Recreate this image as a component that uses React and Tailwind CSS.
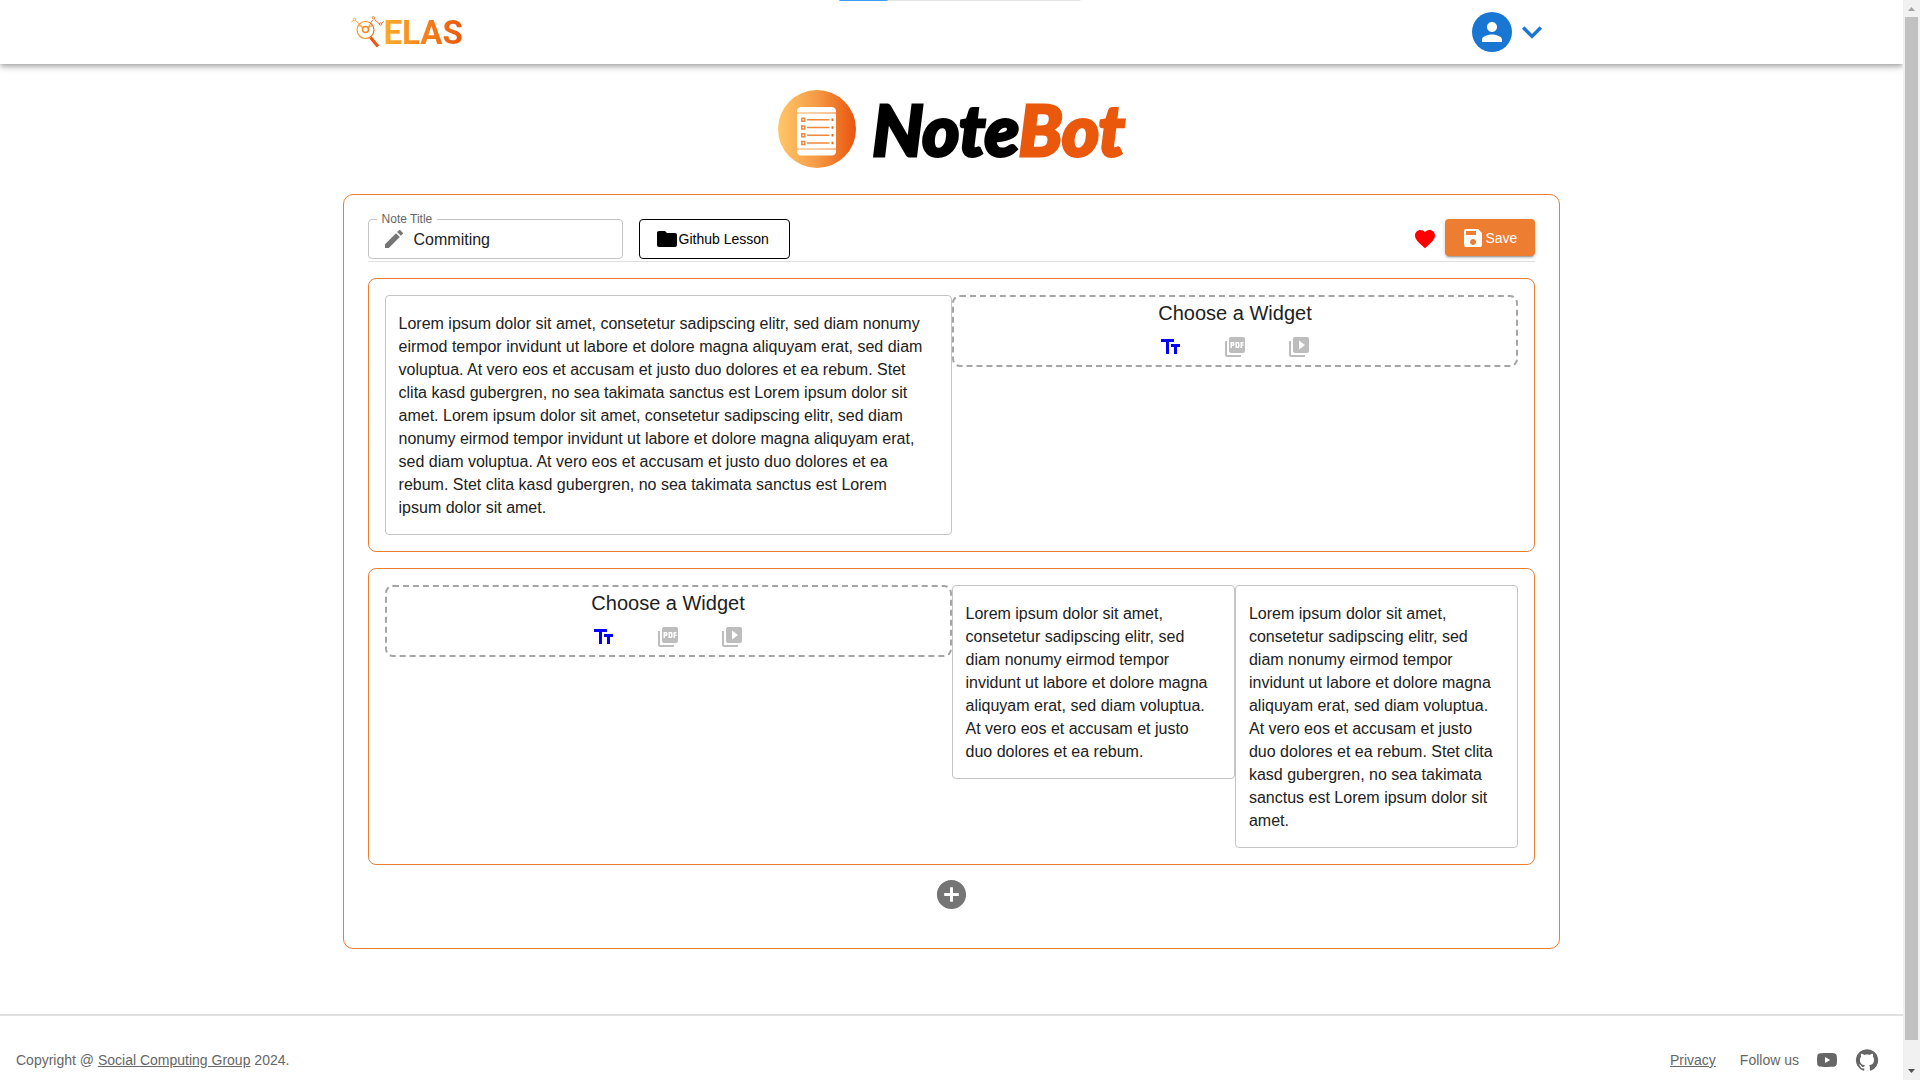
import React from "react";
import {
  MdAddCircle,
  MdEdit,
  MdFavorite,
  MdFolder,
  MdKeyboardArrowDown,
  MdPerson,
  MdSave,
} from "react-icons/md";

const LONG_NOTE =
  "Lorem ipsum dolor sit amet, consetetur sadipscing elitr, sed diam nonumy eirmod tempor invidunt ut labore et dolore magna aliquyam erat, sed diam voluptua. At vero eos et accusam et justo duo dolores et ea rebum. Stet clita kasd gubergren, no sea takimata sanctus est Lorem ipsum dolor sit amet. Lorem ipsum dolor sit amet, consetetur sadipscing elitr, sed diam nonumy eirmod tempor invidunt ut labore et dolore magna aliquyam erat, sed diam voluptua. At vero eos et accusam et justo duo dolores et ea rebum. Stet clita kasd gubergren, no sea takimata sanctus est Lorem ipsum dolor sit amet.";
const SHORT_NOTE =
  "Lorem ipsum dolor sit amet, consetetur sadipscing elitr, sed diam nonumy eirmod tempor invidunt ut labore et dolore magna aliquyam erat, sed diam voluptua. At vero eos et accusam et justo duo dolores et ea rebum.";
const MEDIUM_NOTE =
  SHORT_NOTE +
  " Stet clita kasd gubergren, no sea takimata sanctus est Lorem ipsum dolor sit amet.";

function Glyph({ d, className }) {
  return (
    <svg viewBox="0 0 24 24" className={className} fill="currentColor" aria-hidden="true">
      <path d={d} />
    </svg>
  );
}

const TEXT_D = "M2 4v3h5v12h3V7h5V4H2zm19 5h-9v3h3v7h3v-7h3V9z";
const PDF_D =
  "M20 2H8c-1.1 0-2 .9-2 2v12c0 1.1.9 2 2 2h12c1.1 0 2-.9 2-2V4c0-1.1-.9-2-2-2zm-8.500 7.500c0 .83-.67 1.500-1.500 1.500H9v2H7.500V7H10c.83 0 1.500.67 1.500 1.500v1zm5 2c0 .83-.67 1.500-1.500 1.500h-2.500V7H15c.83 0 1.500.67 1.500 1.500v3zm4-3H19v1h1.500V11H19v2h-1.500V7h3v1.500zM9 9.500h1v-1H9v1zM4 6H2v14c0 1.100.9 2 2 2h14v-2H4V6zm10 5.500h1v-3h-1v3z";
const VIDEO_D =
  "M4 6H2v14c0 1.100.9 2 2 2h14v-2H4V6zm16-4H8c-1.100 0-2 .9-2 2v12c0 1.100.9 2 2 2h12c1.100 0 2-.9 2-2V4c0-1.100-.9-2-2-2zm-8 12.500v-9l6 4.500-6 4.500z";
const YOUTUBE_D =
  "M10 15l5.190-3L10 9v6m11.560-7.830c.130.470.220 1.100.280 1.900.070.800.100 1.490.100 2.090L22 12c0 2.190-.160 3.800-.440 4.830-.250.900-.830 1.480-1.730 1.730-.470.130-1.330.220-2.650.280-1.300.070-2.490.100-3.590.100L12 19c-4.190 0-6.800-.160-7.830-.440-.900-.250-1.480-.830-1.730-1.730-.130-.470-.220-1.100-.280-1.900-.070-.800-.100-1.490-.100-2.090L2 12c0-2.190.160-3.800.440-4.830.250-.900.830-1.480 1.730-1.730.470-.130 1.330-.220 2.650-.280 1.300-.070 2.490-.100 3.590-.100L12 5c4.190 0 6.800.160 7.830.440.900.250 1.480.830 1.730 1.730z";
const GITHUB_D =
  "M12 1.270a11 11 0 00-3.480 21.460c.550.090.730-.280.730-.550v-1.840c-3.030.640-3.670-1.460-3.670-1.460-.550-1.290-1.280-1.650-1.280-1.650-.920-.650.100-.650.100-.650 1.100 0 1.730 1.100 1.730 1.100.920 1.650 2.570 1.200 3.210.920a2 2 0 01.640-1.470c-2.470-.270-5.040-1.190-5.040-5.500 0-1.100.460-2.100 1.200-2.840a3.760 3.760 0 010-2.930s.910-.280 3.110 1.100c1.800-.490 3.700-.490 5.500 0 2.100-1.380 3.020-1.100 3.020-1.100a3.760 3.760 0 01.100 2.930c.830.740 1.200 1.740 1.200 2.940 0 4.210-2.570 5.130-5.040 5.400.450.370.820.920.820 2.020v3.030c0 .270.100.640.730.550A11 11 0 0012 1.270";

function ElasLogo() {
  return (
    <a href="#home" aria-label="ELAS" className="flex items-center">
      <svg viewBox="0 0 33 33" className="h-[33px] w-[33px]" fill="none" aria-hidden="true">
        <defs>
          <linearGradient id="elas" x1="0" y1="0" x2="33" y2="0" gradientUnits="userSpaceOnUse">
            <stop offset="0" stopColor="#fbab2c" />
            <stop offset="1" stopColor="#ea560d" />
          </linearGradient>
        </defs>
        <g stroke="url(#elas)">
          <path d="M0 6.500l2.300-2.300M4.700 4.700l7 6.300M17.500 11l4-7M23.500 3.500l5 4.500M30.500 7.500l2-2" strokeWidth="0.900" />
          <circle cx="3.500" cy="3.500" r="1.200" strokeWidth="0.900" />
          <circle cx="22.500" cy="1.800" r="1.200" strokeWidth="0.900" />
          <circle cx="29.600" cy="8" r="1.200" strokeWidth="0.900" />
          <circle cx="14.500" cy="14" r="8.500" strokeWidth="1.200" />
          <circle cx="14.500" cy="13.500" r="3" strokeWidth="1.500" />
          <path d="M8 10c2 0 3 1 3.500 2M21 10c-2 0-3 1-3.500 2" strokeWidth="1" />
        </g>
        <path d="M19.500 21.500l7.500 9" stroke="#e9590f" strokeWidth="3.200" />
      </svg>
      <span className="bg-linear-to-r from-[#fdab2b] to-[#ea560d] bg-clip-text pt-0.5 font-['Roboto',sans-serif] text-[33px] leading-[40px] font-bold text-transparent">
        ELAS
      </span>
    </a>
  );
}

function NoteBotLogo() {
  const rows = [0, 15.500, 31, 46.500];
  return (
    <h1 className="flex items-center justify-center gap-4 py-[26px]">
      <svg viewBox="0 0 156 156" className="h-[78px] w-[78px]" aria-hidden="true">
        <defs>
          <linearGradient id="disc" x1="0" x2="1" y1="0" y2="0">
            <stop offset="0" stopColor="#ffc768" />
            <stop offset="0.500" stopColor="#f59a45" />
            <stop offset="1" stopColor="#e9540d" />
          </linearGradient>
        </defs>
        <circle cx="78" cy="78" r="78" fill="url(#disc)" />
        <path d="M38 45v-2q0-9 9-9h60q9 0 9 9v2zM38 47h78v70H38zM38 119h78v3q0 9-9 9H47q-9 0-9-9z" fill="#fff" />
        {rows.map((y) => (
          <g key={y} transform={"translate(0 " + (y + 30) + ")"} fill="#f0873a">
            <rect x="46" y="25" width="9" height="9" />
            <rect x="49" y="28" width="3" height="3" fill="#fff" />
            <rect x="58" y="28" width="45" height="3" />
            <rect x="107" y="27" width="4" height="5" fill="#ea6a20" />
          </g>
        ))}
      </svg>
      <span className="font-['Lato',sans-serif] text-[71px] leading-[78px] font-black text-black italic [-webkit-text-stroke:3px_currentColor] [paint-order:stroke_fill]">
        Note<span className="text-[#ea580c]">Bot</span>
      </span>
    </h1>
  );
}

function ChooseWidget() {
  return (
    <section className="rounded-lg border-2 border-dashed border-[#a5a5a5] text-center">
      <h2 className="text-xl leading-8 text-[#212121]">Choose a Widget</h2>
      <div className="flex justify-center gap-6">
        <button aria-label="Text" className="flex h-9 w-10 items-center justify-center text-[#0000ff]">
          <Glyph d={TEXT_D} className="h-6 w-6" />
        </button>
        <button aria-label="PDF" className="flex h-9 w-10 items-center justify-center text-[#bdbdbd]">
          <Glyph d={PDF_D} className="h-6 w-6" />
        </button>
        <button aria-label="Video" className="flex h-9 w-10 items-center justify-center text-[#bdbdbd]">
          <Glyph d={VIDEO_D} className="h-6 w-6" />
        </button>
      </div>
    </section>
  );
}

function Note({ children }) {
  return (
    <p className="rounded border border-[#c4c4c4] pt-4 pr-[22px] pb-[15px] pl-[13px] text-base leading-[23px] text-[#212121]">
      {children}
    </p>
  );
}

export default function App() {
  return (
    <div className="relative flex min-h-screen bg-white font-['Liberation_Sans',Arial,sans-serif] text-[#212121]">
      <div className="absolute top-0 left-1/2 z-10 h-px w-[241px] -translate-x-1/2 bg-[#e5e5e5]">
        <div className="h-px w-1/5 bg-[#409eff]" />
      </div>

      <div className="flex min-w-0 flex-1 flex-col">
        <header className="shadow-[0_2px_4px_-1px_rgba(0,0,0,0.2),0_4px_5px_0_rgba(0,0,0,0.14),0_1px_10px_0_rgba(0,0,0,0.12)]">
          <div className="mx-auto flex h-16 w-[64%] items-center justify-between px-2">
            <ElasLogo />
            <button aria-label="Account menu" className="flex items-center text-[#1976d2]">
              <span className="flex h-10 w-10 items-center justify-center rounded-full bg-[#1976d2] text-white">
                <MdPerson className="h-[30px] w-[30px]" />
              </span>
              <MdKeyboardArrowDown className="h-10 w-10" />
            </button>
          </div>
        </header>

        <main className="mx-auto w-[64%] flex-1">
          <NoteBotLogo />
          <div className="rounded-[10px] border border-[#ed7d31] px-6 pt-6 pb-6">
            <div className="flex items-start justify-between border-b border-[#e0e0e0] pb-0.5">
              <div className="flex gap-4">
                <div className="relative flex h-10 w-[255px] items-center gap-2 rounded border border-[#c4c4c4] px-[13px]">
                  <label
                    htmlFor="note-title"
                    className="absolute -top-[9px] left-2 bg-white px-[5px] text-xs leading-4 text-[#666666]"
                  >
                    Note Title
                  </label>
                  <MdEdit className="h-6 w-6 shrink-0 text-[#757575]" />
                  <input id="note-title" defaultValue="Commiting" className="w-full min-w-0 pt-0.5 text-base outline-none" />
                </div>
                <button className="flex h-10 w-[151px] items-center rounded border border-black pl-[15px] text-sm text-black">
                  <MdFolder className="h-6 w-6" />
                  Github Lesson
                </button>
              </div>
              <div className="flex gap-2">
                <button aria-label="Favorite" className="flex h-10 items-center text-[#ff0000]">
                  <MdFavorite className="h-6 w-6" />
                </button>
                <button className="flex h-[37px] w-[90px] items-center rounded bg-[#ed7d31] pl-4 text-sm text-white shadow-[0_3px_1px_-2px_rgba(0,0,0,0.2),0_2px_2px_0_rgba(0,0,0,0.14),0_1px_5px_0_rgba(0,0,0,0.12)]">
                  <MdSave className="h-6 w-6" />
                  Save
                </button>
              </div>
            </div>

            <div className="mt-4 flex flex-col gap-4">
              <div className="grid grid-cols-2 items-start rounded-lg border border-[#ed7d31] p-4">
                <Note>{LONG_NOTE}</Note>
                <ChooseWidget />
              </div>
              <div className="grid grid-cols-[2fr_1fr_1fr] items-start rounded-lg border border-[#ed7d31] p-4">
                <ChooseWidget />
                <Note>{SHORT_NOTE}</Note>
                <Note>{MEDIUM_NOTE}</Note>
              </div>
            </div>
            <div className="flex justify-center">
              <button aria-label="Add row" className="p-3 text-[#757575]">
                <MdAddCircle className="h-[35px] w-[35px]" />
              </button>
            </div>
          </div>
        </main>

        <footer className="mt-16 flex items-center justify-between border-t-2 border-[#e0e0e0] px-4 pt-8 pb-2 text-sm text-[#666666]">
          <p>
            Copyright @{" "}
            <a href="#group" className="underline">
              Social Computing Group
            </a>{" "}
            2024.
          </p>
          <div className="flex items-center pr-2">
            <a href="#privacy" className="mr-6 underline">
              Privacy
            </a>
            <span className="mr-4">Follow us</span>
            <a href="#youtube" aria-label="YouTube" className="mr-4">
              <Glyph d={YOUTUBE_D} className="h-6 w-6" />
            </a>
            <a href="#github" aria-label="GitHub">
              <Glyph d={GITHUB_D} className="h-6 w-6" />
            </a>
          </div>
        </footer>
      </div>

      <div aria-hidden="true" className="sticky top-0 flex h-screen w-[17px] flex-col items-center bg-[#f1f1f1]">
        <svg viewBox="0 0 17 17" className="h-[17px] w-[17px] shrink-0">
          <path d="M5 11h7L8.500 7z" fill="#a3a3a3" />
        </svg>
        <div className="w-[13px] flex-1 bg-[#c1c1c1]" />
        <svg viewBox="0 0 17 40" className="h-10 w-[17px] shrink-0">
          <path d="M5 29h7l-3.500 4z" fill="#505050" />
        </svg>
      </div>
    </div>
  );
}
